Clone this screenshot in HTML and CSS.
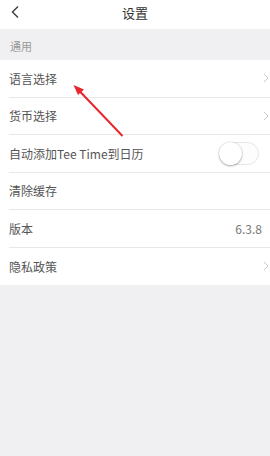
FILE: index.html
```html
<!DOCTYPE html>
<html lang="zh-CN">
<head>
<meta charset="utf-8">
<link rel="stylesheet" href="styles.css">
</head>
<body>
<div class="page">
  <header class="topbar">
    <svg class="back" width="10" height="14" viewBox="0 0 10 14"><path d="M8 1.5 L2.5 7 L8 12.5" fill="none" stroke="#444" stroke-width="1.5"/></svg>
    <div class="title">设置</div>
  </header>
  <div class="section">通用</div>
  <ul class="list">
    <li class="row"><span>语言选择</span><svg class="chev" width="6" height="10" viewBox="0 0 6 10"><path d="M1 1 L5 5 L1 9" fill="none" stroke="#c8c8cc" stroke-width="1"/></svg></li>
    <li class="row"><span>货币选择</span><svg class="chev" width="6" height="10" viewBox="0 0 6 10"><path d="M1 1 L5 5 L1 9" fill="none" stroke="#c8c8cc" stroke-width="1"/></svg></li>
    <li class="row tall"><span>自动添加Tee Time到日历</span><span class="toggle"><span class="knob"></span></span></li>
    <li class="row"><span>清除缓存</span></li>
    <li class="row"><span>版本</span><span class="value">6.3.8</span></li>
    <li class="row last"><span>隐私政策</span><svg class="chev" width="6" height="10" viewBox="0 0 6 10"><path d="M1 1 L5 5 L1 9" fill="none" stroke="#c8c8cc" stroke-width="1"/></svg></li>
  </ul>
  <svg class="annot" width="270" height="456" viewBox="0 0 270 456">
    <line x1="122.5" y1="136" x2="79" y2="90.5" stroke="#e8262b" stroke-width="2"/>
    <polygon points="73.5,85 84,89.5 78,95" fill="#e8262b"/>
  </svg>
</div>
</body>
</html>
```
FILE: styles.css
```css
* { box-sizing: border-box; margin: 0; padding: 0; }
html, body { width: 270px; height: 456px; overflow: hidden; }
body {
  background: #f0f0f2;
  font-family: "Noto Sans CJK SC", "Noto Sans", sans-serif;
  color: #444;
}
.page { position: relative; width: 270px; height: 456px; }
.topbar {
  height: 29px;
  background: #fff;
  display: flex;
  align-items: center;
  justify-content: center;
  position: relative;
}
.back { position: absolute; left: 10px; top: 5px; }
.title { font-size: 13px; color: #333; line-height: 1; margin-top: -4px; }
.section {
  height: 31px;
  padding-left: 10px;
  display: flex;
  align-items: center;
  font-size: 11px;
  color: #999;
  padding-top: 2px;
}
.list { list-style: none; background: #fff; }
.row {
  height: 37.5px;
  margin-left: 9px;
  padding-right: 2px;
  display: flex;
  align-items: center;
  justify-content: space-between;
  font-size: 12px;
  color: #555;
  border-bottom: 1px solid #e8e8ea;
}
.row.last { border-bottom: none; }
.chev { margin-right: -1px; }
.value { font-size: 12px; color: #777; margin-right: 6px; }
.toggle {
  position: relative;
  width: 40px;
  height: 23px;
  border-radius: 12px;
  border: 1px solid #e6e6e6;
  background: #fdfdfd;
  margin-right: 9px;
}
.knob {
  position: absolute;
  left: -1px;
  top: -1px;
  width: 23px;
  height: 23px;
  border-radius: 50%;
  background: #fff;
  box-shadow: 0 1px 2px rgba(0,0,0,0.3), 0 0 0 0.5px rgba(0,0,0,0.12);
}
.annot { position: absolute; left: 0; top: 0; pointer-events: none; }
```
